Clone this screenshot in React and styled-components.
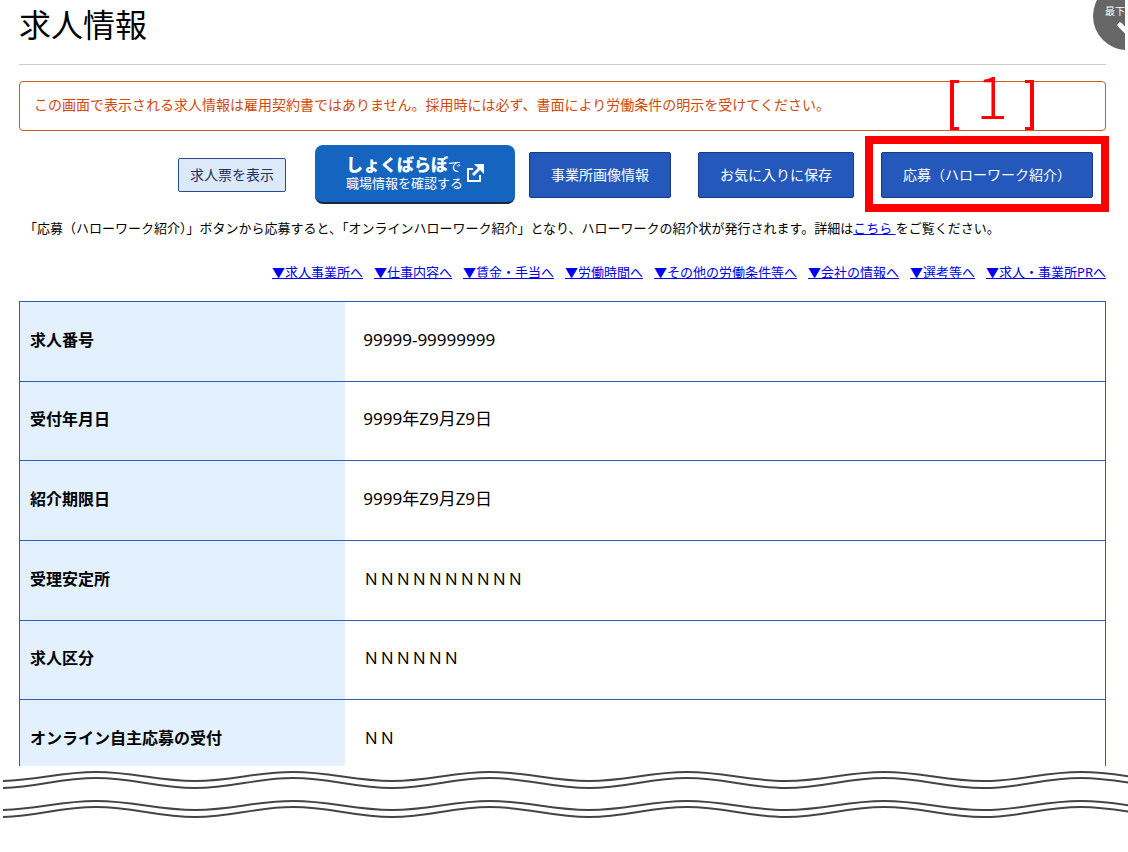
import React from 'react'
import styled, { createGlobalStyle } from 'styled-components';

const links = [
  '▼求人事業所へ',
  '▼仕事内容へ',
  '▼賃金・手当へ',
  '▼労働時間へ',
  '▼その他の労働条件等へ',
  '▼会社の情報へ',
  '▼選考等へ',
  '▼求人・事業所PRへ',
];

const rows = [
  { label: '求人番号', value: '99999-99999999', half: true },
  { label: '受付年月日', value: '9999年Z9月Z9日', half: true },
  { label: '紹介期限日', value: '9999年Z9月Z9日', half: true },
  { label: '受理安定所', value: 'ＮＮＮＮＮＮＮＮＮＮ' },
  { label: '求人区分', value: 'ＮＮＮＮＮＮ' },
  { label: 'オンライン自主応募の受付', value: 'ＮＮ' },
];

// one torn-edge line, crests and troughs alternate along it
const wave = (top, bottom) => {
  let d = `M -5 ${bottom}`;
  for (let i = 0; i < 16; i++) {
    const x = -5 + i * 197;
    d += ` C ${x + 38} ${bottom} ${x + 60} ${top} ${x + 98} ${top}`;
    d += ` S ${x + 159} ${bottom} ${x + 197} ${bottom}`;
  }
  return d;
};

const App = () => {
  return (
    <>
      <GlobalStyle />
      <Page>
        <Header>
          <h1>求人情報</h1>
        </Header>
        <ToBottom>
          <ToBottomLink href="#bottom">
            最下
            <svg width="18" height="14" viewBox="0 0 18 14" aria-hidden="true">
              <path d="M3 3 L10 10 L17 3" fill="none" stroke="#fff" strokeWidth="5" strokeLinecap="round" />
            </svg>
          </ToBottomLink>
        </ToBottom>
        <Notice>この画面で表示される求人情報は雇用契約書ではありません。採用時には必ず、書面により労働条件の明示を受けてください。</Notice>
        <Toolbar>
          <LightButton type="button">求人票を表示</LightButton>
          <LaboButton type="button">
            <LaboText>
              <span><strong>しょくばらぼ</strong>で</span>
              <span>職場情報を確認する</span>
            </LaboText>
            <svg width="18" height="18" viewBox="0 0 18 18" fill="none" stroke="#fff" strokeWidth="2" aria-hidden="true">
              <path d="M7 5 H2 V17 H14 V11" />
              <path d="M7 11 L14 4" strokeWidth="3" />
              <path d="M8 0 H18 V10 Z" fill="#fff" stroke="none" />
            </svg>
          </LaboButton>
          <Actions>
            <BlueButton type="button">事業所画像情報</BlueButton>
            <BlueButton type="button">お気に入りに保存</BlueButton>
            <Marked>
              <BlueButton type="button">応募（ハローワーク紹介）</BlueButton>
              <MarkFrame />
              <MarkNumber><span>1</span></MarkNumber>
            </Marked>
          </Actions>
        </Toolbar>
        <Description>
          「応募（ハローワーク紹介）」ボタンから応募すると、「オンラインハローワーク紹介」となり、ハローワークの紹介状が発行されます。詳細は<a href="#detail">こちら </a>をご覧ください。
        </Description>
        <Anchors>
          {links.map((text) => (
            <a href="#section" key={text}>{text}</a>
          ))}
        </Anchors>
        <TableClip>
          <Table>
            <tbody>
              {rows.map((row) => (
                <tr key={row.label}>
                  <Label scope="row">{row.label}</Label>
                  <Value $half={row.half}>{row.value}</Value>
                </tr>
              ))}
            </tbody>
          </Table>
        </TableClip>
      </Page>
      <Torn id="bottom" aria-hidden="true">
        <path d={wave(6, 15)} />
        <path d={wave(12, 22)} />
        <path d={wave(35, 44)} />
        <path d={wave(41, 51)} />
      </Torn>
    </>
  )
};

const GlobalStyle = createGlobalStyle`
  *, *::before, *::after {
    box-sizing: border-box;
  }
  body {
    margin: 0;
    background: white;
    color: black;
    font-family: "Noto Sans", "Noto Sans CJK JP", sans-serif;
  }
  button {
    font-family: inherit;
  }
  a {
    color: #0000ee;
  }
`;

const Page = styled.main`
  position: relative;
  padding: 0 22px 0 19px;
`;

const Header = styled.header`
  height: 65px;
  border-bottom: 1px solid #ccc;
  h1 {
    margin: 0;
    font-size: 32px;
    font-weight: 400;
    line-height: 50px;
  }
`;

const ToBottom = styled.div`
  position: absolute;
  top: 0;
  right: 3px;
  width: 32px;
  height: 50px;
  overflow: hidden;
`;

const ToBottomLink = styled.a`
  display: flex;
  flex-direction: column;
  gap: 4px;
  width: 68px;
  height: 68px;
  margin-top: -18px;
  padding: 22px 0 0 12px;
  border-radius: 50%;
  background: #666;
  color: white;
  font-size: 10px;
  line-height: 14px;
  text-decoration: none;
  svg {
    margin-left: 12px;
  }
`;

const Notice = styled.p`
  margin: 16px 0 0;
  padding: 11px 14px 13px;
  border: 1px solid #d4581c;
  border-radius: 4px;
  color: #d1490b;
  font-size: 14px;
  line-height: 24px;
`;

const Toolbar = styled.div`
  display: flex;
  justify-content: flex-end;
  align-items: center;
  margin-top: 14px;
  padding-right: 13px;
`;

const LightButton = styled.button`
  height: 34px;
  margin-right: 29px;
  padding: 0 11px 2px;
  border: 1px solid #2a4a8c;
  border-radius: 2px;
  background: #dbe9f9;
  color: #1c2f5c;
  font-size: 14px;
`;

const LaboButton = styled.button`
  display: flex;
  justify-content: center;
  align-items: center;
  gap: 3px;
  width: 200px;
  height: 59px;
  margin-right: 14px;
  padding: 0 0 2px;
  border: 0;
  border-bottom: 2px solid #1b2638;
  border-radius: 8px;
  background: #1565c0;
  color: white;
`;

const LaboText = styled.span`
  display: flex;
  flex-direction: column;
  font-size: 13px;
  line-height: 16px;
  text-align: left;
  strong {
    font-size: 17px;
    font-weight: 900;
    line-height: 20px;
  }
`;

const Actions = styled.div`
  display: flex;
  gap: 27px;
`;

const BlueButton = styled.button`
  height: 46px;
  padding: 0 21px 2px;
  border: 1px solid #153b85;
  border-radius: 2px;
  background: #2458bb;
  color: white;
  font-size: 14px;
`;

const Marked = styled.div`
  position: relative;
`;

const MarkFrame = styled.div`
  position: absolute;
  inset: -16px -16px -14px;
  border: 8px solid #ff0000;
  pointer-events: none;
`;

const MarkNumber = styled.div`
  position: absolute;
  left: 69px;
  bottom: 68px;
  display: flex;
  justify-content: center;
  align-items: center;
  width: 84px;
  height: 50px;
  color: #ff0000;
  font-family: "Noto Sans CJK JP", sans-serif;
  font-size: 60px;
  font-weight: 300;
  line-height: 50px;
  pointer-events: none;
  &::before, &::after {
    content: '';
    width: 9px;
    height: 50px;
    border: 3px solid #ff0000;
  }
  &::before {
    border-left-width: 4px;
    border-right: 0;
  }
  &::after {
    border-right-width: 4px;
    border-left: 0;
  }
  span {
    flex: 1;
    padding-bottom: 24px;
    text-align: center;
  }
`;

const Description = styled.p`
  margin: 12px 0 0;
  padding-left: 5px;
  font-size: 13px;
  line-height: 24px;
`;

const Anchors = styled.nav`
  display: flex;
  flex-wrap: wrap;
  justify-content: flex-end;
  gap: 0 11px;
  margin-top: 20px;
  font-size: 13px;
  line-height: 24px;
`;

const TableClip = styled.div`
  height: 465px;
  margin-top: 17px;
  overflow: hidden;
`;

const Table = styled.table`
  width: 100%;
  height: 479px;
  border: 1px solid #2a5cbc;
  border-collapse: collapse;
  line-height: 24px;
  tr {
    border-bottom: 1px solid #2a5cbc;
  }
`;

const Label = styled.th`
  width: 30%;
  padding: 0 10px 3px;
  background: #e3f1ff;
  font-size: 16px;
  font-weight: 700;
  text-align: left;
`;

const Value = styled.td`
  padding: 0 18px 3px;
  font-size: ${(props) => (props.$half ? '17px' : '16px')};
`;

const Torn = styled.svg`
  display: block;
  width: calc(100% - 3px);
  height: 60px;
  margin-left: 3px;
  overflow: hidden;
  path {
    fill: none;
    stroke: #444;
    stroke-width: 2px;
  }
`;

export default App
